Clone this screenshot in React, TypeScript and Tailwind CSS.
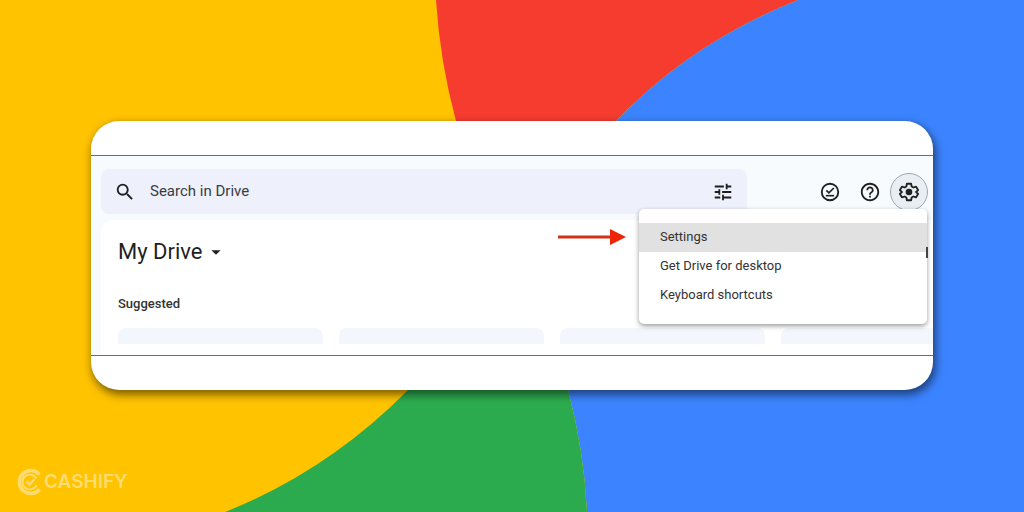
import { ReactNode } from 'react';
import {
	MdArrowDropDown,
	MdHelpOutline,
	MdSearch,
	MdTune,
} from 'react-icons/md';
import clsx from 'clsx';

const menuItems = ['Settings', 'Get Drive for desktop', 'Keyboard shortcuts'];

export default function App() {
	return (
		<div className="relative isolate flex min-h-screen flex-col overflow-hidden bg-[#ffc300] font-['Roboto',sans-serif] text-[#1f1f1f]">
			<Backdrop />
			<main className="px-[91px] pt-[121px]">
				<div className="rounded-[28px] bg-white py-[34px] shadow-[2px_4px_8px_1px_rgba(0,0,0,0.5)]">
					<DriveWindow />
				</div>
			</main>
			<footer className="mt-auto px-4 pb-4 text-[#ffdc70]">
				<Brand />
			</footer>
		</div>
	);
}

function DriveWindow() {
	return (
		<div className="relative border-y border-[#6b6b6b] bg-[#f8fbfe] pt-[13px] pl-[10px]">
			<header className="flex items-center">
				<label className="flex h-[45px] min-w-0 flex-1 items-center rounded-lg bg-[#eef1fc] px-[13px]">
					<MdSearch className="size-[22px] shrink-0" />
					<input
						type="search"
						aria-label="Search in Drive"
						placeholder="Search in Drive"
						className="ml-[14px] min-w-0 flex-1 bg-transparent text-[15px] outline-none placeholder:text-[#3a3c42]"
					/>
					<button type="button" aria-label="Search options">
						<MdTune className="size-[22px]" />
					</button>
				</label>
				<div className="flex shrink-0 items-center pl-[63px] pr-[5px]">
					<IconButton label="Ready for offline">
						<OfflineIcon />
					</IconButton>
					<IconButton label="Support">
						<MdHelpOutline className="size-[22px]" />
					</IconButton>
					<button
						type="button"
						aria-label="Settings menu"
						className="grid size-[38px] place-items-center rounded-full border border-[#9aa9b5] bg-[#e9eef3]"
					>
						<GearIcon />
					</button>
				</div>
			</header>
			<section className="mt-[6px] overflow-hidden rounded-tl-xl bg-white pt-4 pb-[11px] pl-[17px]">
				<h1>
					<button type="button" className="flex items-center text-[22px] leading-8">
						My Drive
						<MdArrowDropDown className="ml-[2px] size-[22px]" />
					</button>
				</h1>
				<h2 className="mt-[26px] text-[13px] font-medium leading-5 text-[#333]">
					Suggested
				</h2>
				<div className="mt-[14px] flex gap-4">
					<Placeholder />
					<Placeholder />
					<Placeholder />
					<Placeholder />
				</div>
			</section>
			<SettingsMenu />
		</div>
	);
}

function SettingsMenu() {
	return (
		<div className="absolute top-[53px] right-[6px] w-[288px] rounded-[5px] bg-white py-[14px] shadow-[0_2px_5px_rgba(0,0,0,0.4)]">
			<ul>
				{menuItems.map((item, i) => (
					<li key={item}>
						<button
							type="button"
							className={clsx(
								'block w-full px-[21px] pt-1 pb-[5px] text-left text-[13px] leading-5 text-[#333]',
								i === 0 && 'bg-[#e1e1e1]',
							)}
						>
							{item}
						</button>
					</li>
				))}
			</ul>
			<svg
				viewBox="0 0 70 18"
				className="absolute top-[19px] right-full mr-3 h-[18px] w-[70px]"
				aria-hidden="true"
			>
				<path d="M1 9h54" stroke="#d0331a" strokeWidth="3" />
				<path d="M53 1l16 8-16 8z" fill="#ee2409" />
			</svg>
			<span className="absolute top-[38px] -right-px h-[11px] w-[2px] bg-[#444]" />
		</div>
	);
}

function IconButton({ label, children }: { label: string; children: ReactNode }) {
	return (
		<button
			type="button"
			aria-label={label}
			className="grid size-10 place-items-center"
		>
			{children}
		</button>
	);
}

function OfflineIcon() {
	return (
		<svg viewBox="0 0 24 24" className="size-[22px]" fill="none" stroke="currentColor" strokeWidth="2">
			<circle cx="12" cy="12" r="9" />
			<path d="M8 10.200l2.800 2.800 5.400-5.400" strokeWidth="1.800" />
			<path d="M7.500 16h9" strokeWidth="1.800" />
		</svg>
	);
}

function GearIcon() {
	return (
		<svg viewBox="0 0 24 24" className="size-[22px]">
			<path
				d="M9.700 3h4.600l.6 3 1.900 1.100 2.900-1 2.300 3.900-2.300 2 2.300 2-2.300 3.900-2.900-1-1.900 1.100-.6 3H9.700l-.6-3-1.900-1.100-2.900 1L2 14l2.300-2L2 10l2.300-3.900 2.900 1L9.100 6z"
				fill="none"
				stroke="currentColor"
				strokeWidth="2"
				strokeLinejoin="round"
			/>
			<circle cx="12" cy="12" r="3.600" fill="currentColor" />
		</svg>
	);
}

function Placeholder() {
	return <div className="h-4 w-[205px] shrink-0 rounded-t-lg bg-[#f4f6fe]" />;
}

function Brand() {
	return (
		<div className="flex items-center">
			<svg viewBox="0 0 28 28" className="size-7" fill="none" stroke="currentColor">
				<path d="M23.500 6.500a11.500 11.500 0 1 0 0 15" strokeWidth="3.500" />
				<path d="M20.500 10.500a7.500 7.500 0 1 0 0 7" strokeWidth="2" />
				<path d="M10.500 13.500l3 3 5-5.500" strokeWidth="2.500" />
			</svg>
			<span className="font-['Inter',sans-serif] text-[19px] font-semibold leading-7">
				CASHIFY
			</span>
		</div>
	);
}

function Backdrop() {
	return (
		<svg
			viewBox="0 0 1024 512"
			preserveAspectRatio="none"
			className="absolute inset-0 -z-10 size-full"
			aria-hidden="true"
		>
			<path d="M436 0Q440 62 456 121L512 256L616 121Q692 42 798 0z" fill="#f53c2f" />
			<path
				d="M798 0Q692 42 616 121L512 256L568 390Q584 450 587 512H1024V0z"
				fill="#3c84ff"
			/>
			<path
				d="M408 390Q328 471 225 512H587Q584 450 568 390L512 256z"
				fill="#2cab4e"
			/>
		</svg>
	);
}
